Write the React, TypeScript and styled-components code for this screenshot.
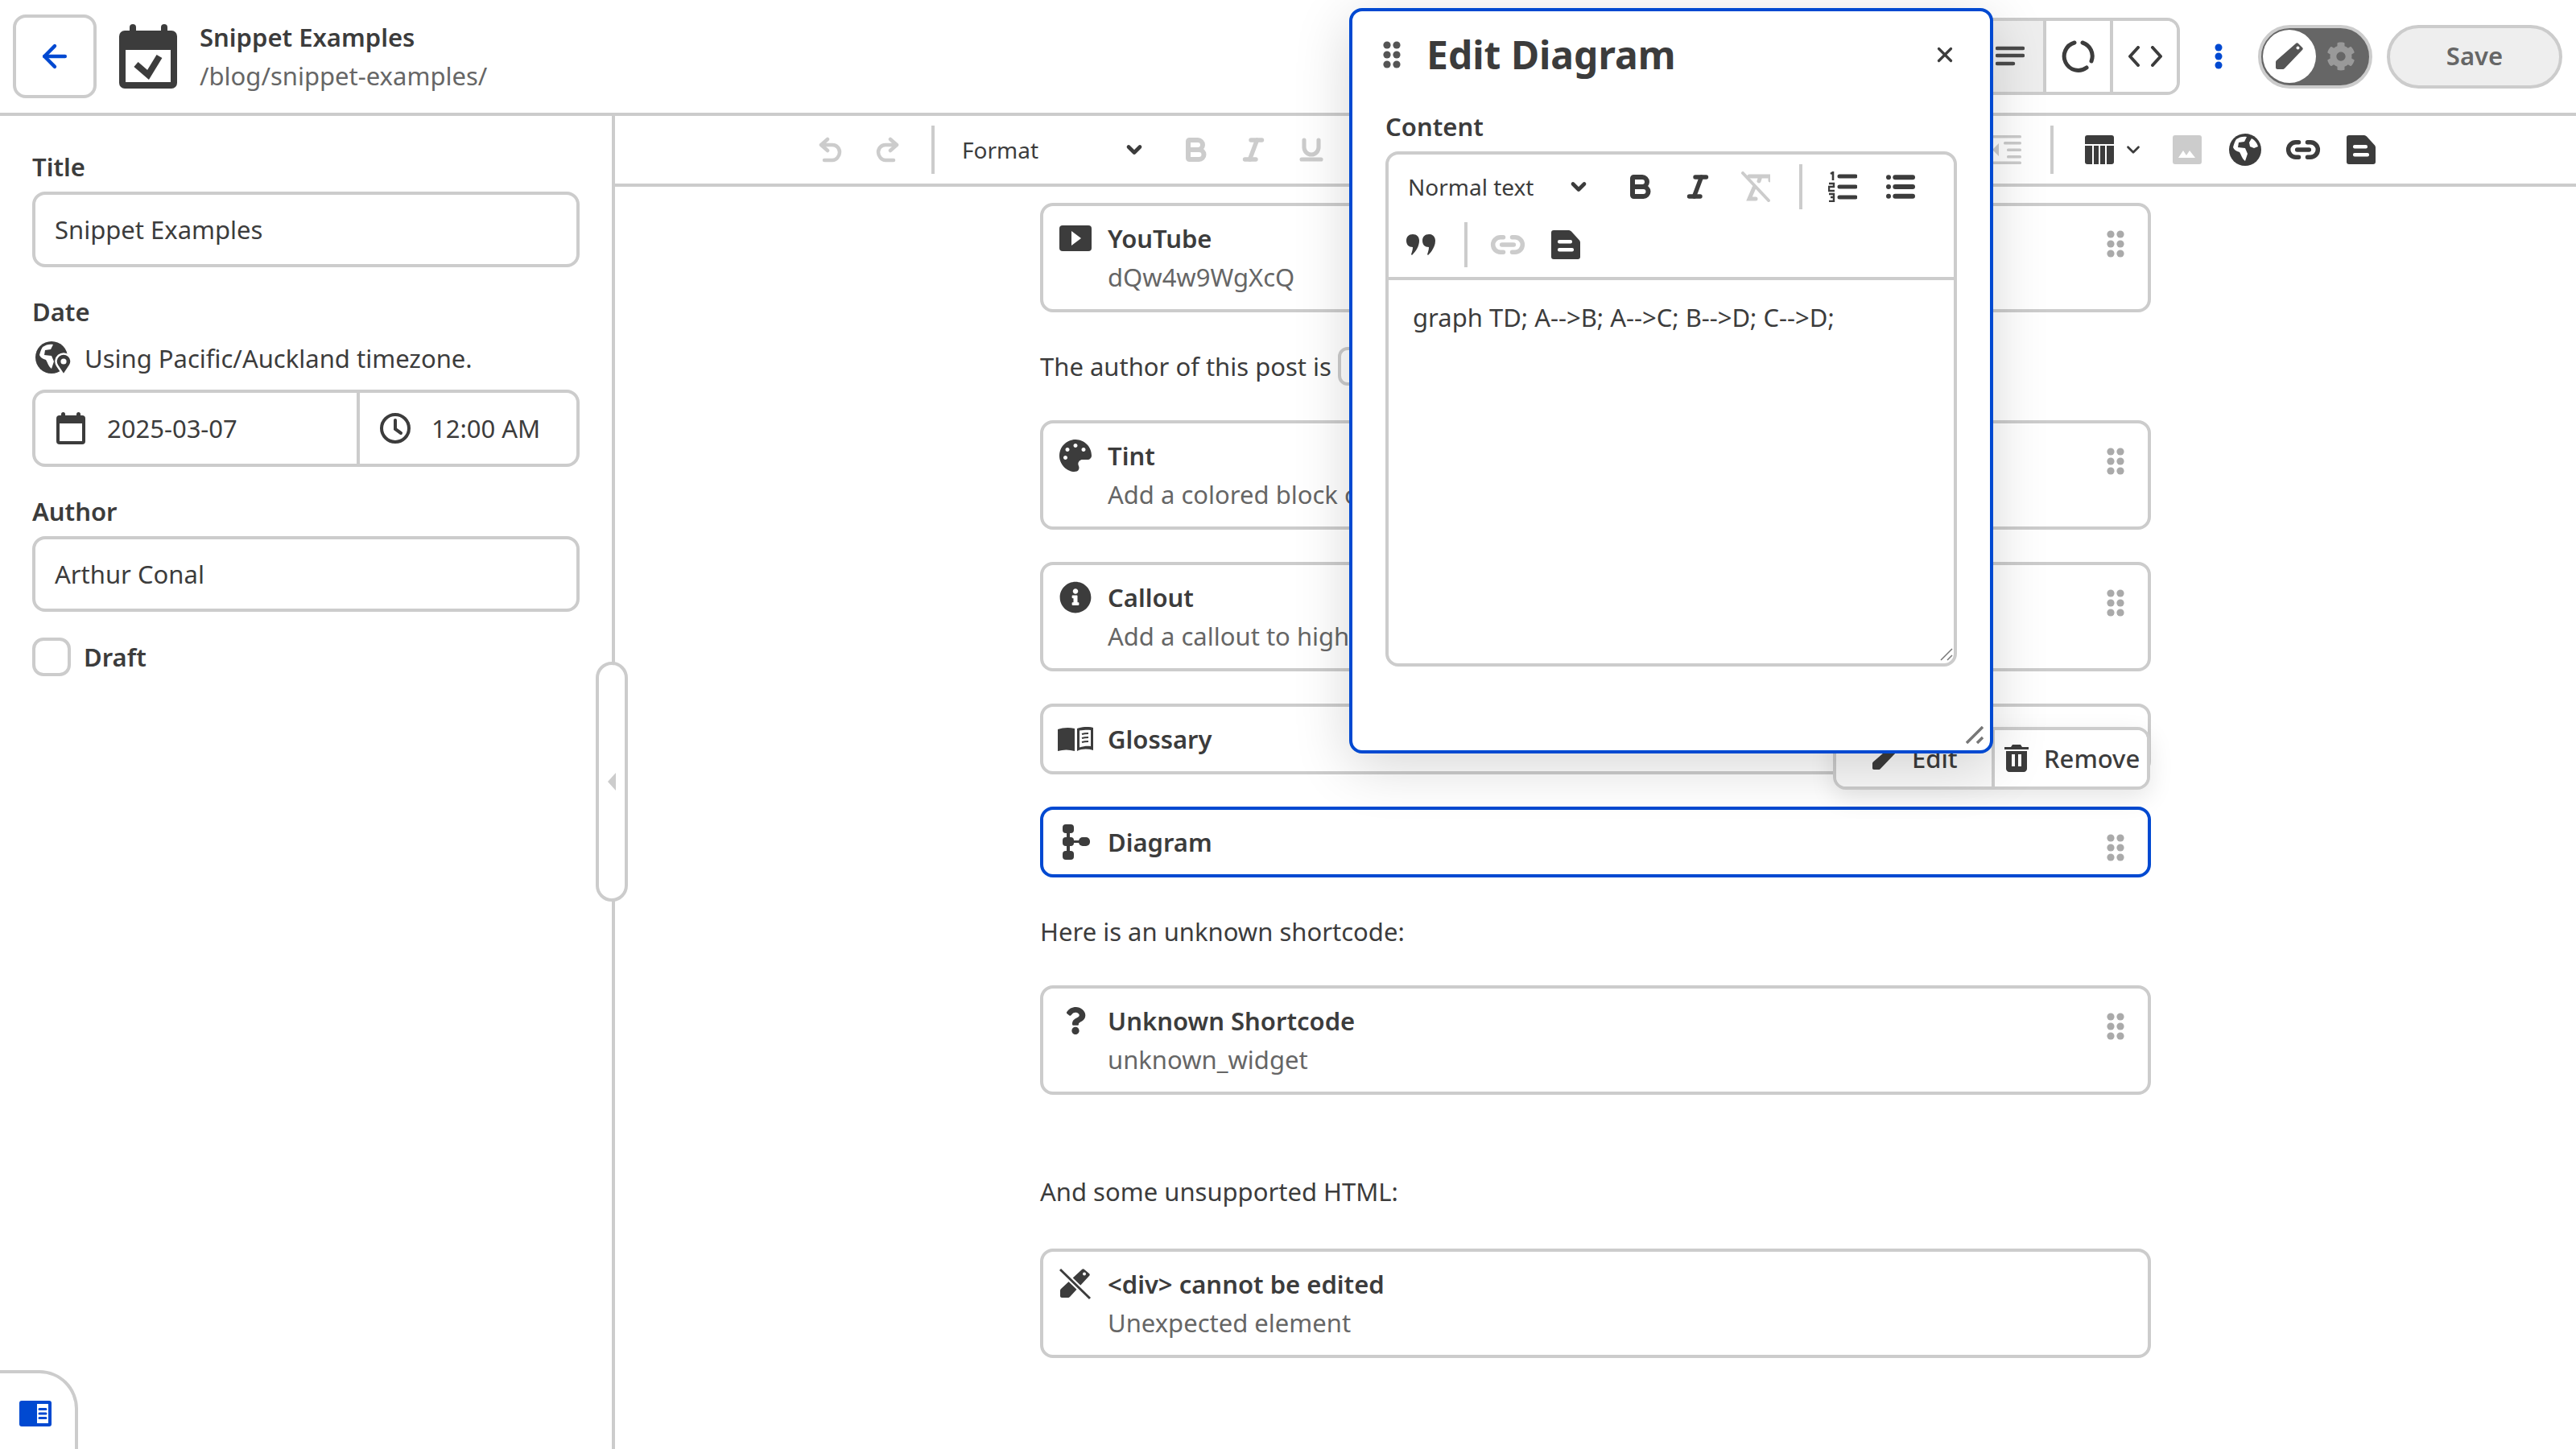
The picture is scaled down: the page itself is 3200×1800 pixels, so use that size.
import React from 'react'
import styled, { createGlobalStyle } from 'styled-components'
import {
	ArrowLeft,
	Bold,
	ChevronDown,
	Italic,
	Link2,
	List,
	Underline,
	X,
} from 'lucide-react'
import { FaCog, FaInfoCircle, FaPalette, FaQuestion } from 'react-icons/fa'

const DARK = '#3c3c3c'
const MUTED = '#666'
const LINE = '#ccc'
const BLUE = '#0049d1'

const GlobalStyle = createGlobalStyle`
	html, body {
		margin: 0;
		padding: 0;
		background: #fff;
		color: ${DARK};
		font-family: 'Noto Sans', 'Open Sans', sans-serif;
		font-size: 31px;
		line-height: 48px;
	}
	* {
		box-sizing: border-box;
	}
`

const Page = styled.div`
	position: relative;
	display: flex;
	flex-direction: column;
	width: 3200px;
	height: 1800px;
	overflow: hidden;
`

const Header = styled.header`
	display: flex;
	align-items: center;
	justify-content: space-between;
	height: 144px;
	padding: 0 17px 0 16px;
	border-bottom: 4px solid ${LINE};
`

const HeaderLeft = styled.div`
	display: flex;
	align-items: center;
	gap: 28px;
`

const HeaderRight = styled.div`
	display: flex;
	align-items: center;
`

const BackButton = styled.button`
	display: flex;
	align-items: center;
	justify-content: center;
	width: 104px;
	height: 104px;
	padding: 0;
	background: #fff;
	border: 4px solid ${LINE};
	border-radius: 16px;
	color: ${BLUE};
`

const PageTitle = styled.div`
	font-weight: 600;
`

const PagePath = styled.div`
	color: ${MUTED};
`

const SegmentGroup = styled.div`
	display: flex;
	height: 96px;
	border: 4px solid ${LINE};
	border-radius: 16px;
	overflow: hidden;
`

const Segment = styled.button<{ $active?: boolean }>`
	display: flex;
	align-items: center;
	justify-content: center;
	width: 83px;
	padding: 0;
	background: ${p => (p.$active ? '#eee' : '#fff')};
	border: 0;
	border-left: 4px solid ${LINE};
	color: ${DARK};
	&:first-child {
		border-left: 0;
	}
`

const MoreButton = styled.button`
	display: flex;
	align-items: center;
	justify-content: center;
	width: 72px;
	height: 72px;
	margin: 0 13px 0 12px;
	padding: 0;
	background: none;
	border: 0;
	color: ${BLUE};
`

const ModeSwitch = styled.div`
	display: flex;
	align-items: center;
	justify-content: space-between;
	width: 142px;
	height: 79px;
	padding: 2px 17px 2px 2px;
	background: #666;
	border: 4px solid ${LINE};
	border-radius: 40px;
	color: #999;
`

const SwitchKnob = styled.span`
	display: flex;
	align-items: center;
	justify-content: center;
	width: 66px;
	height: 66px;
	background: #fff;
	border-radius: 50%;
	color: #555;
`

const SaveButton = styled.button`
	width: 218px;
	height: 79px;
	margin-left: 18px;
	padding: 0 0 2px;
	background: #eee;
	border: 4px solid ${LINE};
	border-radius: 40px;
	color: ${MUTED};
	font: 600 31px 'Noto Sans', sans-serif;
`

const Body = styled.div`
	display: flex;
	flex: 1;
	min-height: 0;
`

const Sidebar = styled.aside`
	position: relative;
	width: 764px;
	padding: 42px 40px 0;
	border-right: 4px solid ${LINE};
`

const FieldLabel = styled.label<{ $top?: number }>`
	display: block;
	margin: ${p => p.$top ?? 0}px 0 10px;
	font-weight: 600;
	line-height: 42px;
`

const FieldBox = styled.div`
	display: flex;
	align-items: center;
	width: 680px;
	height: 94px;
	padding: 0 24px;
	border: 4px solid ${LINE};
	border-radius: 16px;
`

const TimezoneNote = styled.div`
	display: flex;
	align-items: center;
	gap: 17px;
	height: 42px;
	margin: 16px 0 18px 4px;
`

const DateGroup = styled.div`
	display: flex;
	width: 680px;
	height: 96px;
	border: 4px solid ${LINE};
	border-radius: 16px;
`

const DatePart = styled.div`
	display: flex;
	align-items: center;
	gap: 27px;
	width: 399px;
	padding-left: 26px;
`

const TimePart = styled.div`
	display: flex;
	align-items: center;
	gap: 25px;
	flex: 1;
	padding-left: 24px;
	border-left: 4px solid ${LINE};
`

const DraftRow = styled.div`
	display: flex;
	align-items: center;
	gap: 16px;
	margin-top: 32px;
	font-weight: 600;
`

const CheckBox = styled.span`
	width: 48px;
	height: 48px;
	border: 4px solid ${LINE};
	border-radius: 14px;
`

const CollapseHandle = styled.button`
	position: absolute;
	top: 678px;
	left: 740px;
	display: flex;
	align-items: center;
	justify-content: center;
	width: 40px;
	height: 298px;
	padding: 0;
	background: #fff;
	border: 4px solid ${LINE};
	border-radius: 20px;
	&::before {
		content: '';
		border-style: solid;
		border-width: 11px 10px 11px 0;
		border-color: transparent ${LINE} transparent transparent;
	}
`

const PanelToggle = styled.button`
	position: absolute;
	left: 0;
	bottom: 0;
	display: flex;
	align-items: flex-start;
	width: 97px;
	height: 98px;
	padding: 34px 0 0 24px;
	background: #fff;
	border: 0;
	border-top: 4px solid ${LINE};
	border-right: 4px solid ${LINE};
	border-top-right-radius: 48px;
`

const Main = styled.main`
	display: flex;
	flex-direction: column;
	flex: 1;
	min-width: 0;
`

const Toolbar = styled.div`
	display: flex;
	align-items: center;
	justify-content: center;
	flex-shrink: 0;
	height: 88px;
	border-bottom: 4px solid ${LINE};
`

const ToolButton = styled.button<{ $off?: boolean }>`
	display: flex;
	align-items: center;
	justify-content: center;
	flex-shrink: 0;
	width: 72px;
	height: 72px;
	padding: 0;
	background: none;
	border: 0;
	color: ${p => (p.$off ? LINE : DARK)};
`

const TableButton = styled(ToolButton)`
	justify-content: flex-start;
	gap: 11px;
	width: 116px;
	padding-left: 25px;
`

const ToolDivider = styled.span<{ $h: number }>`
	flex-shrink: 0;
	width: 4px;
	height: ${p => p.$h}px;
	margin: 0 14px 0 18px;
	background: ${LINE};
`

const SelectBox = styled.div<{ $w: number }>`
	display: flex;
	align-items: center;
	justify-content: space-between;
	flex-shrink: 0;
	width: ${p => p.$w}px;
	padding: 0 26px 0 20px;
	font-size: 28px;
`

const HiddenTools = styled.div`
	flex-shrink: 0;
	width: 792px;
`

const Scroller = styled.div`
	flex: 1;
	padding-top: 20px;
	overflow: hidden;
`

const Column = styled.div`
	width: 1380px;
	margin: 0 auto;
	& > :first-child {
		margin-top: 0;
	}
`

const Paragraph = styled.p<{ $top?: number; $bottom?: number }>`
	margin: ${p => p.$top ?? 43}px 0 ${p => p.$bottom ?? 43}px;
	height: 48px;
	white-space: nowrap;
`

const InlineChip = styled.span`
	display: inline-block;
	height: 48px;
	margin-left: 8px;
	padding: 0 16px;
	border: 4px solid ${LINE};
	border-radius: 12px;
	line-height: 40px;
`

const Card = styled.div<{ $selected?: boolean }>`
	position: relative;
	display: flex;
	margin: 40px 0;
	padding: 16px;
	background: #fff;
	border: 4px solid ${p => (p.$selected ? BLUE : LINE)};
	border-radius: 16px;
`

const CardIcon = styled.div`
	display: flex;
	align-items: center;
	justify-content: center;
	flex-shrink: 0;
	width: 48px;
	height: 48px;
	margin-right: 16px;
`

const CardText = styled.div`
	flex: 1;
	min-width: 0;
`

const CardTitle = styled.div`
	font-weight: 600;
`

const CardNote = styled.div`
	color: ${MUTED};
`

const DragSlot = styled.div`
	display: flex;
	justify-content: center;
	flex-shrink: 0;
	width: 48px;
	height: 48px;
	padding-top: 14px;
	color: #aaa;
`

const FloatingActions = styled.div`
	position: absolute;
	top: -103px;
	right: -3px;
	display: flex;
	height: 78px;
	background: #fff;
	border: 4px solid ${LINE};
	border-radius: 16px;
	box-shadow: 0 10px 30px rgba(0, 0, 0, 0.1);
	overflow: hidden;
`

const ActionButton = styled.button<{ $w: number; $pad: number; $tint?: boolean }>`
	display: flex;
	align-items: center;
	justify-content: flex-start;
	gap: 19px;
	width: ${p => p.$w}px;
	padding: 0 0 0 ${p => p.$pad}px;
	background: ${p => (p.$tint ? '#f9f9f9' : '#fff')};
	border: 0;
	color: ${DARK};
	font: 500 31px 'Noto Sans', sans-serif;
	& + & {
		border-left: 4px solid ${LINE};
	}
`

const Dialog = styled.div`
	position: absolute;
	top: 10px;
	left: 1676px;
	width: 800px;
	height: 926px;
	background: #fff;
	border: 4px solid ${BLUE};
	border-radius: 16px;
	box-shadow: 0 16px 70px rgba(0, 0, 0, 0.16);
`

const DialogHeader = styled.div`
	display: flex;
	align-items: center;
	gap: 32px;
	height: 108px;
	padding: 0 20px 0 38px;
`

const DialogTitle = styled.h2`
	flex: 1;
	margin: 0;
	font-size: 48px;
	font-weight: 700;
	line-height: 60px;
`

const CloseButton = styled.button`
	display: flex;
	align-items: center;
	justify-content: center;
	width: 72px;
	height: 72px;
	padding: 0;
	background: none;
	border: 0;
	color: ${DARK};
`

const ContentLabel = styled.div`
	margin: 14px 41px 10px;
	font-weight: 600;
	line-height: 42px;
`

const RichEditor = styled.div`
	position: relative;
	width: 710px;
	height: 640px;
	margin-left: 41px;
	border: 4px solid ${LINE};
	border-radius: 16px;
`

const EditorTools = styled.div`
	display: flex;
	flex-wrap: wrap;
	align-items: center;
	height: 156px;
	padding: 4px;
	border-bottom: 4px solid ${LINE};
`

const EditorText = styled.div`
	padding: 22px 30px;
`

const CornerGrip = styled.svg`
	position: absolute;
	right: var(--grip-right);
	bottom: var(--grip-bottom);
`

const SmallGrip = styled(CornerGrip)`
	--grip-right: 0px;
	--grip-bottom: 2px;
`

const DialogGrip = styled(CornerGrip)`
	--grip-right: 8px;
	--grip-bottom: 8px;
`

// Inline drawings, for the glyphs the icon packages don't carry

const Dots = ({ color }: { color?: string }) => (
	<svg width='22' height='34' viewBox='0 0 22 34' fill={color || 'currentColor'}>
		<circle cx='5' cy='5' r='4.6' />
		<circle cx='17' cy='5' r='4.6' />
		<circle cx='5' cy='17' r='4.6' />
		<circle cx='17' cy='17' r='4.6' />
		<circle cx='5' cy='29' r='4.6' />
		<circle cx='17' cy='29' r='4.6' />
	</svg>
)

const UndoIcon = ({ flip }: { flip?: boolean }) => (
	<svg
		width='30'
		height='32'
		viewBox='0 0 30 32'
		fill='none'
		stroke={LINE}
		strokeWidth='4.500'
		strokeLinecap='round'
		strokeLinejoin='round'
		transform={flip ? 'scale(-1 1)' : undefined}
	>
		<path d='M12 3L4 10l8 7M4 10h14c5 0 9 4 9 9s-4 10-9 10H8' />
	</svg>
)

const CalendarCheck = () => (
	<svg width='72' height='80' viewBox='0 0 72 80' fill={DARK}>
		<rect x='13' y='0' width='8' height='16' rx='4' />
		<rect x='52' y='0' width='8' height='16' rx='4' />
		<rect x='0' y='8' width='72' height='72' rx='7' />
		<rect x='8' y='32' width='56' height='40' fill='#fff' />
		<path d='M21 50l15 13 14-23' fill='none' stroke={DARK} strokeWidth='8' />
	</svg>
)

const CalendarSmall = () => (
	<svg width='36' height='40' viewBox='0 0 36 40' fill={DARK}>
		<rect x='6' y='0' width='5' height='8' rx='2.5' />
		<rect x='25' y='0' width='5' height='8' rx='2.5' />
		<rect x='0' y='4' width='36' height='36' rx='4' />
		<rect x='4' y='14' width='28' height='22' fill='#fff' />
	</svg>
)

const Clock = () => (
	<svg width='40' height='40' viewBox='0 0 40 40' fill='none' stroke={DARK} strokeWidth='4'>
		<circle cx='20' cy='20' r='17' />
		<path d='M20 10v11l7 5' strokeLinecap='round' />
	</svg>
)

const Globe = ({ size = 40 }: { size?: number }) => (
	<svg width={size} height={size} viewBox='0 0 40 40'>
		<circle cx='20' cy='20' r='20' fill={DARK} />
		<path d='M9 7c4-3 9-4 13-3l-3 6-7 1-1 6 9 1 3 7-3 9c-4-3-5-8-7-11-4-1-7-3-8-6 1-4 2-7 4-10zM28 6c4 2 7 6 8 10l-5 2-5-2-1-5z' fill='#fff' />
	</svg>
)

const GlobePin = () => (
	<svg width='44' height='42' viewBox='0 0 44 42'>
		<circle cx='20' cy='20' r='20' fill={DARK} />
		<path d='M9 7c4-3 9-4 13-3l-3 6-7 1-1 6 9 1 3 7-3 9c-4-3-5-8-7-11-4-1-7-3-8-6 1-4 2-7 4-10z' fill='#fff' />
		<path d='M35 42l-8-12a9.5 9.5 0 1 1 16 0z' fill={DARK} stroke='#fff' strokeWidth='2.5' />
		<circle cx='35' cy='25' r='3.6' fill='#fff' />
	</svg>
)

const DocIcon = () => (
	<svg width='36' height='36' viewBox='0 0 36 36'>
		<path d='M3 0h19c1 0 2 .5 3 1.500l10 11c.6.700 1 1.500 1 2.500v18c0 2-1 3-3 3H3c-2 0-3-1-3-3V3c0-2 1-3 3-3z' fill={DARK} />
		<rect x='8' y='12' width='18' height='4.500' rx='2' fill='#fff' />
		<rect x='8' y='22' width='20' height='4.500' rx='2' fill='#fff' />
	</svg>
)

const TableIcon = () => (
	<svg width='36' height='36' viewBox='0 0 36 36' fill={DARK}>
		<path d='M3 0h30c2 0 3 1 3 3v8H0V3c0-2 1-3 3-3z' />
		<path d='M0 13h9v23H3c-2 0-3-1-3-3z' />
		<rect x='11' y='13' width='6' height='23' />
		<rect x='19' y='13' width='6' height='23' />
		<path d='M27 13h9v20c0 2-1 3-3 3h-6z' />
	</svg>
)

const ImageIcon = () => (
	<svg width='36' height='36' viewBox='0 0 36 36'>
		<rect width='36' height='36' rx='3' fill={LINE} />
		<path d='M7 28l6-9 4 6 4-6 7 9z' fill='#fff' />
	</svg>
)

const IndentIcon = () => (
	<svg width='36' height='36' viewBox='0 0 36 36' fill={LINE}>
		<rect x='0' y='0' width='36' height='3.500' rx='1.500' />
		<rect x='14' y='8' width='22' height='3.500' rx='1.500' />
		<rect x='18' y='16.500' width='18' height='3.500' rx='1.500' />
		<rect x='18' y='25' width='18' height='3.500' rx='1.500' />
		<rect x='0' y='32.500' width='36' height='3.500' rx='1.500' />
		<path d='M0 18l8-8v16z' />
	</svg>
)

const QuoteIcon = () => (
	<svg width='36' height='26' viewBox='0 0 36 26' fill={DARK}>
		<path d='M8 0c5 0 8 3 8 8 0 7-4 13-9 18l-1-1c1-3 2-6 2-9-5 0-8-3-8-8s3-8 8-8z' />
		<path d='M28 0c5 0 8 3 8 8 0 7-4 13-9 18l-1-1c1-3 2-6 2-9-5 0-8-3-8-8s3-8 8-8z' />
	</svg>
)

const ClearFormatIcon = () => (
	<svg width='36' height='38' viewBox='0 0 36 38' fill='none' stroke={LINE} strokeWidth='4' strokeLinecap='round'>
		<path d='M2 2l32 34' />
		<path d='M10 6h26v5M24 6l-2 6M16 20l-6 14h8' strokeWidth='5' />
	</svg>
)

const OrderedListIcon = () => (
	<svg width='36' height='38' viewBox='0 0 36 38' fill='none' stroke={DARK}>
		<path d='M3 3l3-2v10' strokeWidth='2.6' />
		<path d='M1 15h6v4H1v5h7' strokeWidth='2.4' />
		<path d='M1 28h6v4H3m4 0v5H1' strokeWidth='2.4' />
		<path d='M14 6h20M14 19h20M14 32h20' strokeWidth='5' strokeLinecap='round' />
	</svg>
)

const AlignIcon = () => (
	<svg width='36' height='26' viewBox='0 0 36 26' fill='none' stroke='#4a4a4a' strokeWidth='4.500' strokeLinecap='round'>
		<path d='M2 3h32M2 12h32M2 22h20' />
	</svg>
)

const CycleIcon = () => (
	<svg width='42' height='42' viewBox='0 0 42 42' fill='none' stroke={DARK} strokeWidth='5' strokeLinecap='round'>
		<path d='M16 4A17.500 17.500 0 1 0 31 35' />
		<path d='M26 4A17.500 17.500 0 0 1 37 27' />
	</svg>
)

const CodeIcon = () => (
	<svg width='42' height='26' viewBox='0 0 42 26' fill='none' stroke={DARK} strokeWidth='4' strokeLinecap='round' strokeLinejoin='round'>
		<path d='M12 2L2 13l10 11M30 2l10 11-10 11' />
	</svg>
)

const VerticalDots = () => (
	<svg width='10' height='32' viewBox='0 0 10 32' fill='currentColor'>
		<circle cx='5' cy='5' r='4.500' />
		<circle cx='5' cy='16' r='4.500' />
		<circle cx='5' cy='27' r='4.500' />
	</svg>
)

const Pencil = ({ size = 34, color = '#555' }: { size?: number; color?: string }) => (
	<svg width={size} height={size} viewBox='0 0 34 34' fill={color}>
		<path d='M25 1c1-1 2-1 3 0l5 5c1 1 1 2 0 3L11 32c-1 1-2 1-3 1H2c-1 0-2-1-2-2v-6c0-1 0-2 1-3z' />
		<circle cx='27.500' cy='6.500' r='2' fill='#fff' />
	</svg>
)

const TrashIcon = () => (
	<svg width='30' height='34' viewBox='0 0 30 34' fill={DARK}>
		<path d='M10 0h10l2 3h8v3H0V3h8z' />
		<path fillRule='evenodd' d='M2 8h26v22c0 2-2 4-4 4H6c-2 0-4-2-4-4zM9 12v15h4V12zM17 12v15h4V12z' />
	</svg>
)

const PlayIcon = () => (
	<svg width='40' height='32' viewBox='0 0 40 32'>
		<rect width='40' height='32' rx='4' fill={DARK} />
		<path d='M15 7l12 9-12 9z' fill='#fff' />
	</svg>
)

const BookIcon = () => (
	<svg width='44' height='30' viewBox='0 0 44 30' fill={DARK}>
		<path d='M0 3c6-2 13-3 21-1v28c-7-2-14-2-21 0z' />
		<path d='M24 2c6-2 13-3 20-1v28c-7-2-14-2-20 1zM27 4.500v21c5-1.500 9-2 14-1.500V4c-5-.500-9 0-14 .500z' />
		<path d='M30 9c3-1 6-1 8-1M30 14c3-1 6-1 8-1M30 19c3-1 6-1 8-1' fill='none' stroke={DARK} strokeWidth='2' />
	</svg>
)

const DiagramIcon = () => (
	<svg width='36' height='44' viewBox='-2 0 36 44' fill={DARK}>
		<rect x='0' y='0' width='14' height='11' rx='4' />
		<rect x='0' y='16' width='14' height='11' rx='4' />
		<rect x='0' y='33' width='14' height='11' rx='4' />
		<rect x='20' y='16' width='14' height='11' rx='5' />
		<path d='M5 8h4v28H5zM12 20h10v3H12z' />
	</svg>
)

const ToolsOffIcon = () => (
	<svg width='40' height='40' viewBox='0 0 40 40'>
		<path d='M28 2c1-1 2-1 3 0l6 5c1 1 1 2 0 3L13 36c-1 1-2 1-3 1H3c-1 0-2-1-2-2v-6c0-1 0-2 1-3z' fill={DARK} />
		<circle cx='31' cy='7.500' r='2' fill='#fff' />
		<path d='M1 2l37 36' stroke='#fff' strokeWidth='7' />
		<path d='M1 2l37 36' stroke={DARK} strokeWidth='3' />
	</svg>
)

const PanelIcon = () => (
	<svg width='40' height='32' viewBox='0 0 40 32'>
		<rect width='40' height='32' rx='3' fill={BLUE} />
		<rect x='22' y='4' width='14' height='24' fill='#fff' />
		<path d='M25 10.500h8M25 16h8M25 21.500h8' stroke={BLUE} strokeWidth='3' strokeLinecap='round' />
	</svg>
)

const App = () => {
	return (
		<>
			<GlobalStyle />
			<Page>
				<Header>
					<HeaderLeft>
						<BackButton>
							<ArrowLeft size={44} strokeWidth={2.4} />
						</BackButton>
						<CalendarCheck />
						<div>
							<PageTitle>Snippet Examples</PageTitle>
							<PagePath>/blog/snippet-examples/</PagePath>
						</div>
					</HeaderLeft>
					<HeaderRight>
						<SegmentGroup>
							<Segment $active>
								<AlignIcon />
							</Segment>
							<Segment>
								<CycleIcon />
							</Segment>
							<Segment>
								<CodeIcon />
							</Segment>
						</SegmentGroup>
						<MoreButton>
							<VerticalDots />
						</MoreButton>
						<ModeSwitch>
							<SwitchKnob>
								<Pencil />
							</SwitchKnob>
							<FaCog size={36} />
						</ModeSwitch>
						<SaveButton>Save</SaveButton>
					</HeaderRight>
				</Header>
				<Body>
					<Sidebar>
						<FieldLabel>Title</FieldLabel>
						<FieldBox>Snippet Examples</FieldBox>
						<FieldLabel $top={34}>Date</FieldLabel>
						<TimezoneNote>
							<GlobePin />
							Using Pacific/Auckland timezone.
						</TimezoneNote>
						<DateGroup>
							<DatePart>
								<CalendarSmall />
								2025-03-07
							</DatePart>
							<TimePart>
								<Clock />
								12:00 AM
							</TimePart>
						</DateGroup>
						<FieldLabel $top={34}>Author</FieldLabel>
						<FieldBox>Arthur Conal</FieldBox>
						<DraftRow>
							<CheckBox />
							Draft
						</DraftRow>
						<CollapseHandle />
						<PanelToggle>
							<PanelIcon />
						</PanelToggle>
					</Sidebar>
					<Main>
						<Toolbar>
							<ToolButton $off>
								<UndoIcon />
							</ToolButton>
							<ToolButton $off>
								<UndoIcon flip />
							</ToolButton>
							<ToolDivider $h={60} />
							<SelectBox $w={274}>
								Format
								<ChevronDown size={28} strokeWidth={4} />
							</SelectBox>
							<ToolButton $off>
								<Bold size={36} strokeWidth={4} />
							</ToolButton>
							<ToolButton $off>
								<Italic size={36} strokeWidth={3.6} />
							</ToolButton>
							<ToolButton $off>
								<Underline size={36} strokeWidth={3.4} />
							</ToolButton>
							<HiddenTools />
							<ToolButton $off>
								<IndentIcon />
							</ToolButton>
							<ToolDivider $h={60} />
							<TableButton>
								<TableIcon />
								<ChevronDown size={26} strokeWidth={2.5} />
							</TableButton>
							<ToolButton $off>
								<ImageIcon />
							</ToolButton>
							<ToolButton>
								<Globe />
							</ToolButton>
							<ToolButton>
								<Link2 size={44} strokeWidth={3} />
							</ToolButton>
							<ToolButton>
								<DocIcon />
							</ToolButton>
						</Toolbar>
						<Scroller>
							<Column>
								<Card>
									<CardIcon>
										<PlayIcon />
									</CardIcon>
									<CardText>
										<CardTitle>YouTube</CardTitle>
										<CardNote>dQw4w9WgXcQ</CardNote>
									</CardText>
									<DragSlot>
										<Dots />
									</DragSlot>
								</Card>
								<Paragraph>
									The author of this post is
									<InlineChip>Arthur Conal</InlineChip>
								</Paragraph>
								<Card>
									<CardIcon>
										<FaPalette size={40} color={DARK} />
									</CardIcon>
									<CardText>
										<CardTitle>Tint</CardTitle>
										<CardNote>Add a colored block of text</CardNote>
									</CardText>
									<DragSlot>
										<Dots />
									</DragSlot>
								</Card>
								<Card>
									<CardIcon>
										<FaInfoCircle size={40} color={DARK} />
									</CardIcon>
									<CardText>
										<CardTitle>Callout</CardTitle>
										<CardNote>Add a callout to highlight content</CardNote>
									</CardText>
									<DragSlot>
										<Dots />
									</DragSlot>
								</Card>
								<Card>
									<CardIcon>
										<BookIcon />
									</CardIcon>
									<CardText>
										<CardTitle>Glossary</CardTitle>
									</CardText>
									<DragSlot>
										<Dots />
									</DragSlot>
								</Card>
								<Card $selected>
									<CardIcon>
										<DiagramIcon />
									</CardIcon>
									<CardText>
										<CardTitle>Diagram</CardTitle>
									</CardText>
									<DragSlot>
										<Dots />
									</DragSlot>
									<FloatingActions>
										<ActionButton $w={193} $pad={45} $tint>
											<Pencil size={30} color={DARK} />
											Edit
										</ActionButton>
										<ActionButton $w={193} $pad={12}>
											<TrashIcon />
											Remove
										</ActionButton>
									</FloatingActions>
								</Card>
								<Paragraph>Here is an unknown shortcode:</Paragraph>
								<Card>
									<CardIcon>
										<FaQuestion size={34} color={DARK} />
									</CardIcon>
									<CardText>
										<CardTitle>Unknown Shortcode</CardTitle>
										<CardNote>unknown_widget</CardNote>
									</CardText>
									<DragSlot>
										<Dots />
									</DragSlot>
								</Card>
								<Paragraph $top={96} $bottom={47}>And some unsupported HTML:</Paragraph>
								<Card>
									<CardIcon>
										<ToolsOffIcon />
									</CardIcon>
									<CardText>
										<CardTitle>{'<div> cannot be edited'}</CardTitle>
										<CardNote>Unexpected element</CardNote>
									</CardText>
								</Card>
							</Column>
						</Scroller>
					</Main>
				</Body>
				<Dialog>
					<DialogHeader>
						<Dots color='#555' />
						<DialogTitle>Edit Diagram</DialogTitle>
						<CloseButton>
							<X size={30} strokeWidth={2.6} />
						</CloseButton>
					</DialogHeader>
					<ContentLabel>Content</ContentLabel>
					<RichEditor>
						<EditorTools>
							<SelectBox $w={272}>
								Normal text
								<ChevronDown size={28} strokeWidth={4} />
							</SelectBox>
							<ToolButton>
								<Bold size={36} strokeWidth={4} />
							</ToolButton>
							<ToolButton>
								<Italic size={36} strokeWidth={3.6} />
							</ToolButton>
							<ToolButton $off>
								<ClearFormatIcon />
							</ToolButton>
							<ToolDivider $h={56} />
							<ToolButton>
								<OrderedListIcon />
							</ToolButton>
							<ToolButton>
								<List size={40} strokeWidth={3.6} />
							</ToolButton>
							<ToolButton>
								<QuoteIcon />
							</ToolButton>
							<ToolDivider $h={56} />
							<ToolButton $off>
								<Link2 size={44} strokeWidth={3} />
							</ToolButton>
							<ToolButton>
								<DocIcon />
							</ToolButton>
						</EditorTools>
						<EditorText>{'graph TD; A-->B; A-->C; B-->D; C-->D;'}</EditorText>
						<SmallGrip width='18' height='18' viewBox='0 0 18 18' stroke='#777' strokeWidth='1.500'>
							<path d='M2 16L16 2M10 16l6-6' />
						</SmallGrip>
					</RichEditor>
					<DialogGrip width='22' height='22' viewBox='0 0 22 22' stroke='#777' strokeWidth='3.500'>
						<path d='M1 21L21 1M14 21l7-7' />
					</DialogGrip>
				</Dialog>
			</Page>
		</>
	)
}

export default App
